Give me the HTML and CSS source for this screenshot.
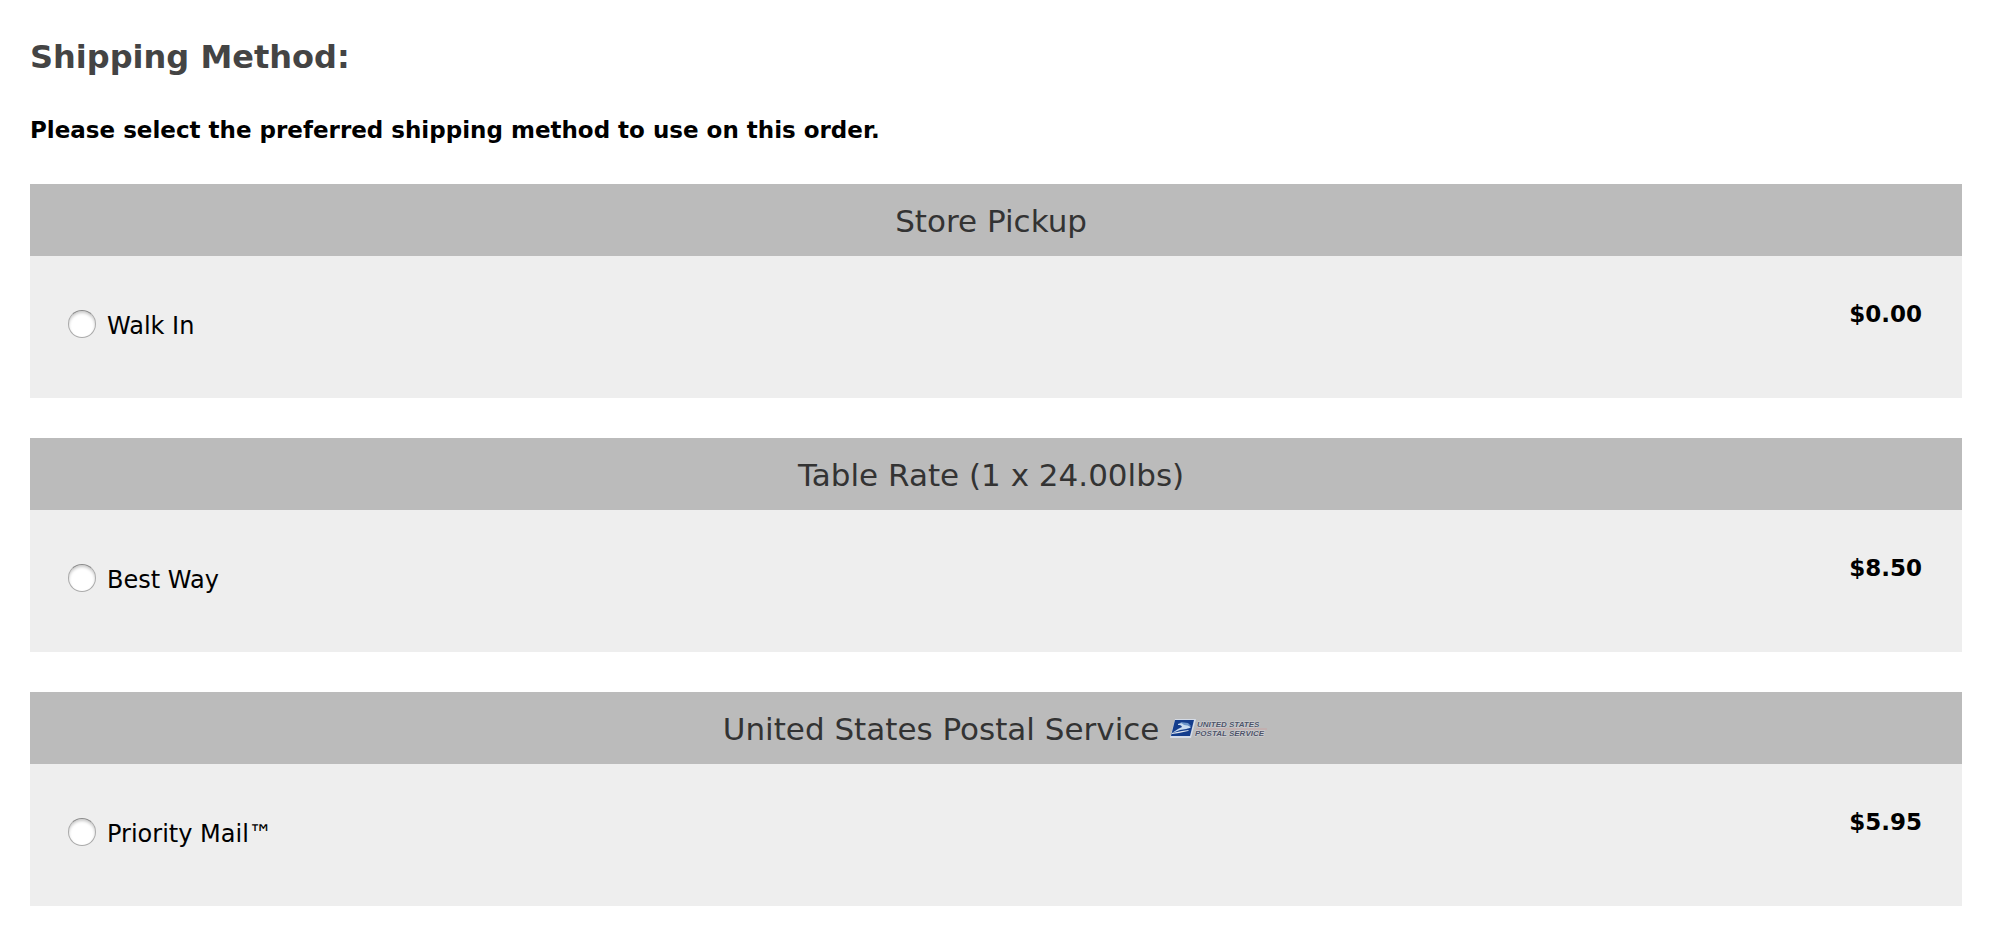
FILE: index.html
```html
<!DOCTYPE html>
<html lang="en">
<head>
<meta charset="utf-8">
<title>Shipping Method</title>
<link rel="stylesheet" href="styles.css">
</head>
<body>
<main class="page">
  <h1 class="title">Shipping Method:</h1>
  <p class="intro">Please select the preferred shipping method to use on this order.</p>
  <form class="methods">
    <section class="method">
      <h2 class="method-name">Store Pickup&nbsp;</h2>
      <div class="method-body">
        <label class="option" for="walk-in"><input class="radio" type="radio" name="shipping" id="walk-in">Walk In</label>
        <strong class="price">$0.00</strong>
      </div>
    </section>
    <section class="method">
      <h2 class="method-name">Table Rate (1 x 24.00lbs)&nbsp;</h2>
      <div class="method-body">
        <label class="option" for="best-way"><input class="radio" type="radio" name="shipping" id="best-way">Best Way</label>
        <strong class="price">$8.50</strong>
      </div>
    </section>
    <section class="method">
      <h2 class="method-name">United States Postal Service&nbsp;<svg class="logo" viewBox="0 0 100 20" role="img" aria-label="United States Postal Service">
        <path fill="#d4dbe7" d="M6 0H27L22 19H1Z"/>
        <path fill="#143d8c" d="M6 1H25L21 17H2Z"/>
        <path fill="#c9dcf0" d="M9 5C13 3 18 4 20 7L22 8C20 10 15 10 11 11L3 14L9 10L13 8C12 6 11 6 9 6Z"/>
        <path fill="#6c96ca" d="M11 3L19 4L22 7L15 6Z"/>
        <path fill="#dfe5ed" d="M3 14L13 12L20 11L19 12L10 14L3 15Z"/>
        <path stroke="#c9a5a5" d="M27 10H98"/>
        <text class="logo-text" x="28" y="8">UNITED STATES</text>
        <text class="logo-text" x="26" y="17">POSTAL SERVICE</text>
      </svg></h2>
      <div class="method-body">
        <label class="option" for="priority-mail"><input class="radio" type="radio" name="shipping" id="priority-mail">Priority Mail™</label>
        <strong class="price">$5.95</strong>
      </div>
    </section>
  </form>
</main>
</body>
</html>
```
FILE: styles.css
```css
body {
  margin: 0;
  background: #fff;
  color: #000;
  font-family: "DejaVu Sans", Verdana, sans-serif;
  font-size: 24px;
  line-height: 32px;
}

.page {
  padding: 37px 30px 34px;
}

.title {
  margin: 0;
  color: #444;
  font-size: 32px;
  line-height: 40px;
}

.intro {
  margin: 37px 0 38px;
  font-size: 23px;
  font-weight: bold;
}

.methods {
  display: grid;
  gap: 40px;
}

.method {
  background: #eee;
}

.method-name {
  margin: 0;
  padding: 17px 16px 15px;
  background: #bbb;
  color: #333;
  font-size: 31px;
  font-weight: normal;
  line-height: 40px;
  text-align: center;
}

.method-body {
  display: flex;
  justify-content: space-between;
  align-items: flex-start;
  padding: 42px 40px 56px 38px;
}

.option {
  display: flex;
  align-items: center;
  gap: 11px;
  padding-top: 12px;
}

.radio {
  appearance: none;
  box-sizing: border-box;
  width: 28px;
  height: 28px;
  margin: 0 0 4px;
  border: 1px solid #aaa;
  border-top-color: #8c8c8c;
  border-radius: 50%;
  background: #fff;
  box-shadow: inset 0 2px 3px #ccc;
}

.radio:checked {
  background: radial-gradient(#333 0 6px, #fff 7px);
}

.price {
  font-size: 23px;
}

.logo {
  width: 100px;
  height: 20px;
  vertical-align: 1px;
}

.logo-text {
  fill: #4e5468;
  stroke: #d4d4d8;
  stroke-width: 1px;
  paint-order: stroke;
  font: italic bold 8px "Liberation Sans", Arial, sans-serif;
}
```
